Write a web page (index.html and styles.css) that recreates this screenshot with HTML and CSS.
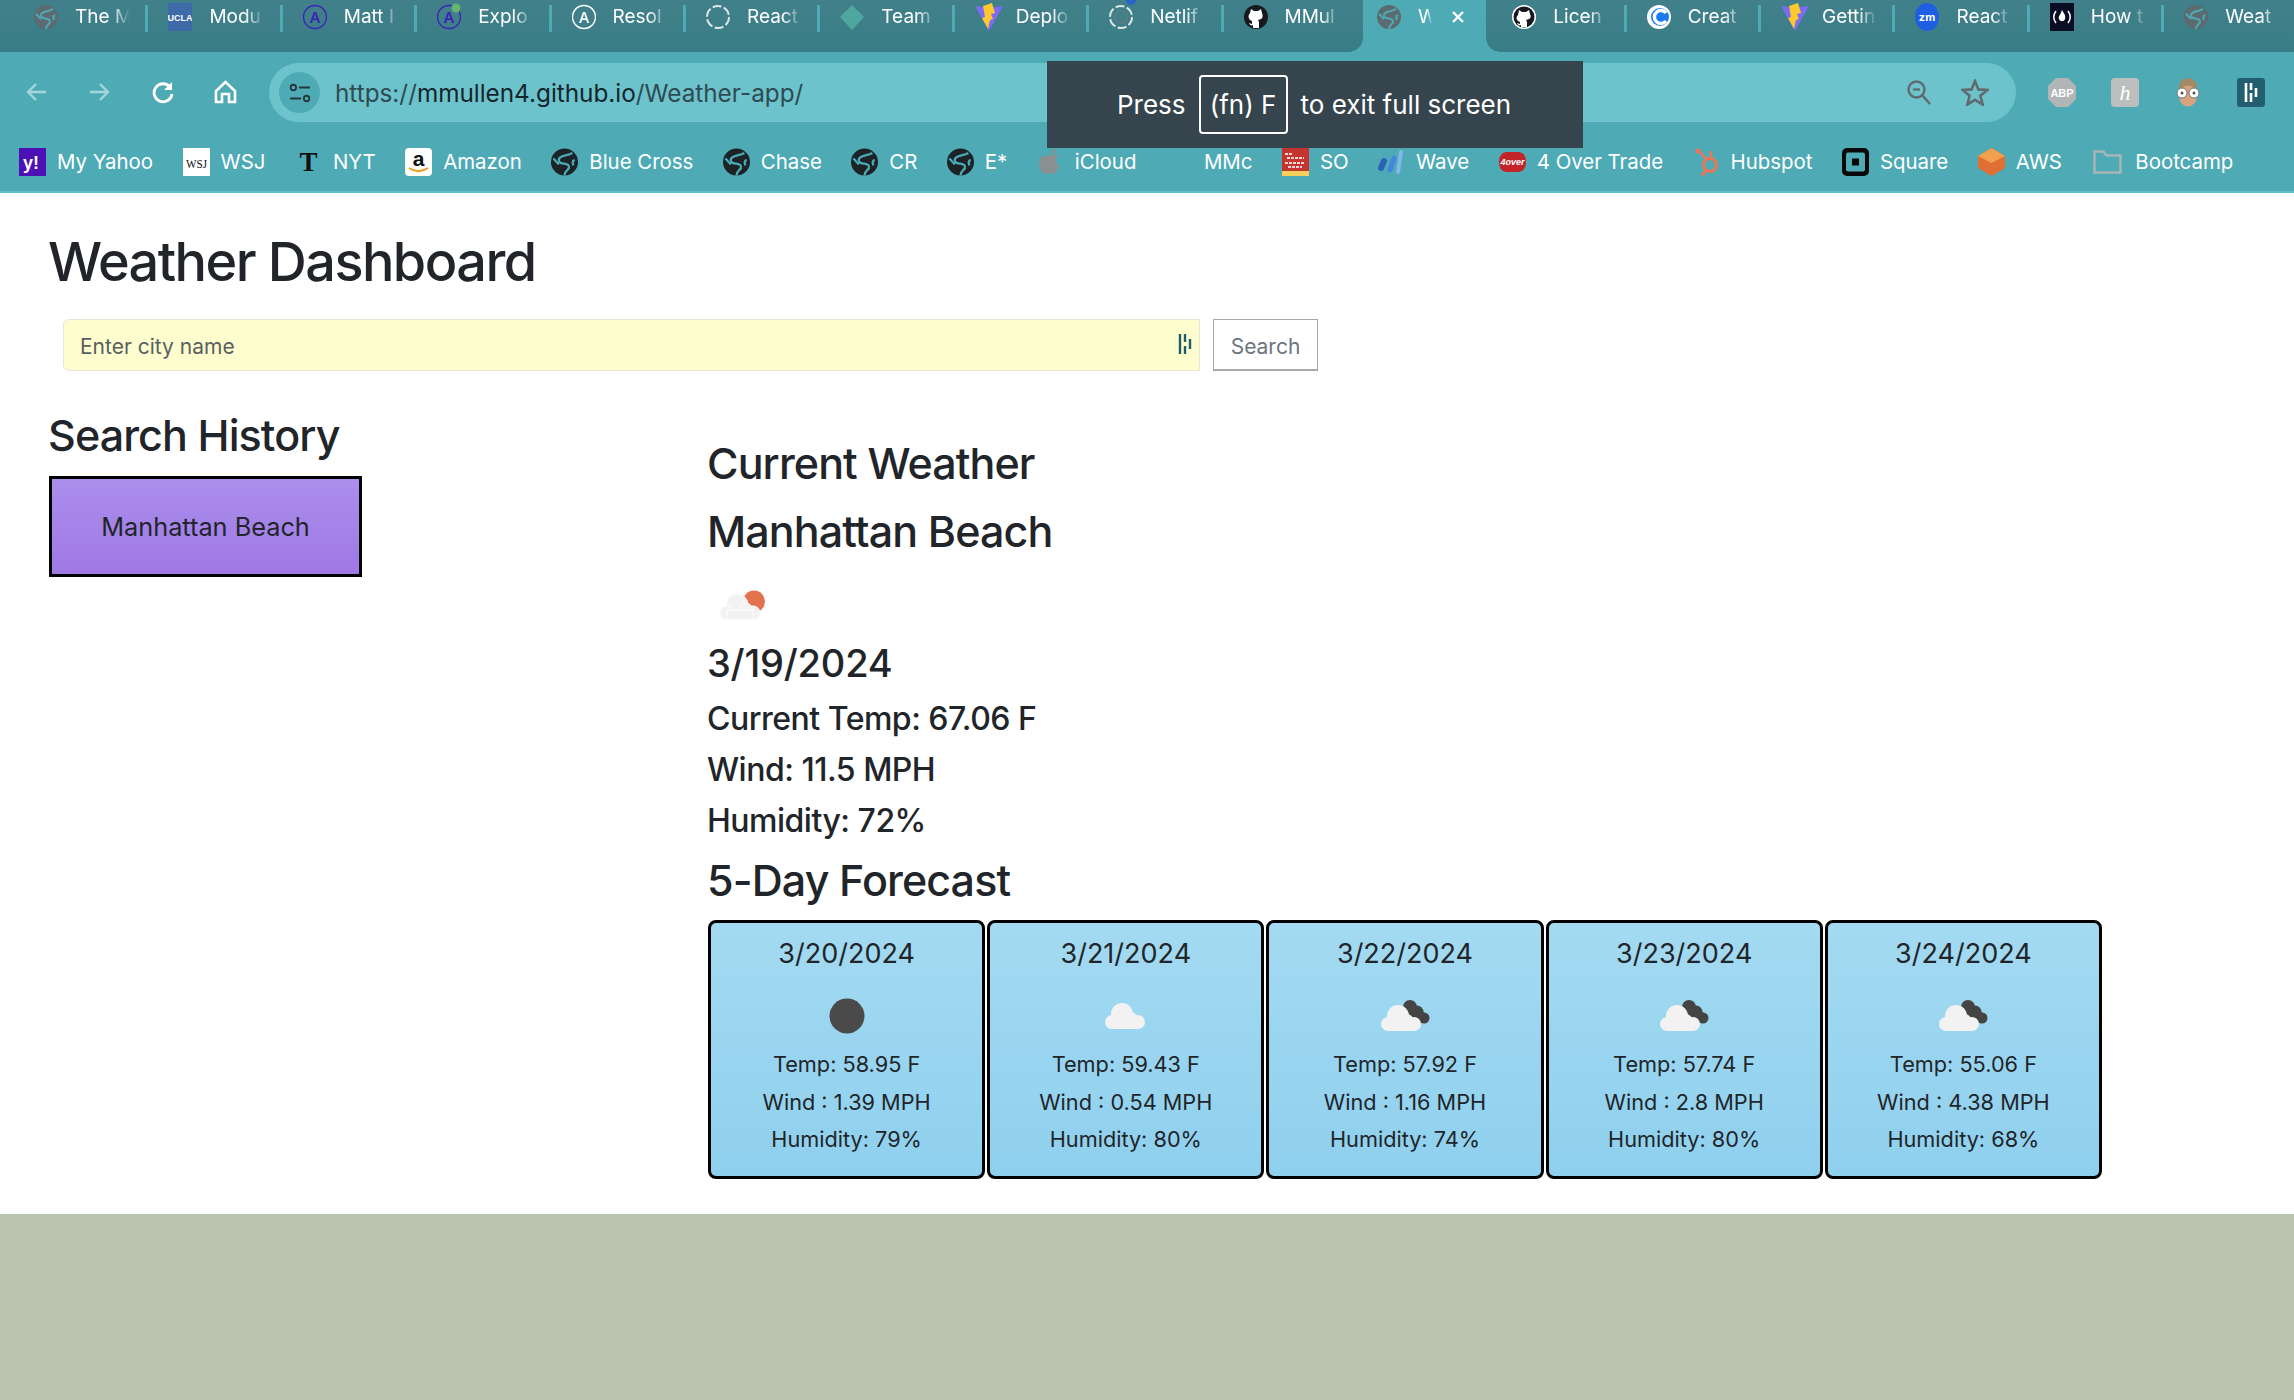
FILE: index.html
```
<!DOCTYPE html>
<html lang="en">
<head>
    <meta charset="UTF-8">
    <title>Weather Dashboard</title>
    <link rel="stylesheet" href="styles.css">
</head>
<body>
<svg class="defs" aria-hidden="true">
    <symbol id="globe" viewBox="0 0 24 24">
        <circle cx="12" cy="12" r="12" fill="currentColor"/>
        <path class="cut" d="M19 4C14 7 6 6 7 11c1 4 8 1 9 5 1 3-4 3-4 8M2 9c2 1 3 4 5 5M21 10c-2 1-2 3-1 5"/>
    </symbol>
    <symbol id="astro" viewBox="0 0 24 28">
        <circle cx="12" cy="14" r="11.500" fill="none" stroke="#3c22b8" stroke-width="1.400"/>
        <text x="12" y="19.500" text-anchor="middle" font-family="Inter, sans-serif" font-size="15" font-weight="600" fill="#3c22b8">A</text>
    </symbol>
    <symbol id="github" viewBox="0 0 24 28">
        <circle cx="12" cy="14" r="12" fill="#16191d"/>
        <path fill="#fff" d="M7 6l3 2h4l3-2 1 4c1 2 1 5-1 6l-3 1 1 2v6H9v-3c-2 1-3 0-4-2l3 1v-3l-2-1c-2-2-2-5 0-7z"/>
    </symbol>
    <symbol id="vite" viewBox="0 0 28 28">
        <path fill="#7d6cf2" d="M0 3l14 2 14-2-14 25z"/>
        <path fill="#fdc92f" d="M17 0L8 3l2 11-3 1 6 11 2-9 3-1-2-5 4-1z"/>
    </symbol>
    <symbol id="cloud" viewBox="0 0 70 70">
        <g>
            <circle cx="31" cy="33" r="11"/>
            <circle cx="21" cy="41" r="7"/>
            <circle cx="47" cy="41" r="7"/>
            <circle cx="40" cy="37" r="6"/>
            <rect x="21" y="38" width="26" height="10"/>
        </g>
    </symbol>
    <symbol id="broken" viewBox="0 0 70 70">
        <g fill="#444">
            <circle cx="40" cy="26" r="7"/>
            <circle cx="47" cy="31" r="6.500"/>
            <circle cx="54" cy="37" r="5.500"/>
            <path d="M36 20l22 14-6 8-14-8z"/>
        </g>
        <g fill="#f2f2f2">
            <circle cx="28" cy="35" r="11"/>
            <circle cx="18" cy="43" r="7"/>
            <circle cx="44" cy="43" r="7"/>
            <circle cx="37" cy="39" r="6"/>
            <rect x="18" y="40" width="26" height="10"/>
        </g>
    </symbol>
</svg>

<div class="tabstrip">
    <div class="tab"><svg class="favicon muted"><use href="#globe"/></svg><span class="tab-title">The M</span></div>
    <div class="tab">
        <svg class="favicon" viewBox="0 0 24 28"><rect width="24" height="28" fill="#3f6aa8"/><text x="12" y="18" text-anchor="middle" font-family="Liberation Sans, sans-serif" font-size="9" font-weight="700" fill="#fff">UCLA</text></svg>
        <span class="tab-title">Modu</span>
    </div>
    <div class="tab"><svg class="favicon"><use href="#astro"/></svg><span class="tab-title">Matt I</span></div>
    <div class="tab">
        <svg class="favicon" viewBox="0 0 24 28"><use href="#astro" width="24" height="28"/><circle cx="19" cy="5" r="4.500" fill="#66b56e"/></svg>
        <span class="tab-title">Explo</span>
    </div>
    <div class="tab">
        <svg class="favicon" viewBox="0 0 24 28"><circle cx="12" cy="14" r="11.500" fill="none" stroke="#fff" stroke-width="1.500"/><text x="12" y="19.500" text-anchor="middle" font-family="Inter, sans-serif" font-size="15" font-weight="500" fill="#fff">A</text></svg>
        <span class="tab-title">Resol</span>
    </div>
    <div class="tab">
        <svg class="favicon" viewBox="0 0 24 28"><circle cx="12" cy="14" r="11" fill="none" stroke="#dfe6e6" stroke-width="2" stroke-dasharray="9 2.500"/></svg>
        <span class="tab-title">React</span>
    </div>
    <div class="tab">
        <svg class="favicon" viewBox="0 0 24 28"><path fill="#4fa79f" d="M12 2l12 12-12 13L0 14z"/></svg>
        <span class="tab-title">Team</span>
    </div>
    <div class="tab"><svg class="favicon wide"><use href="#vite"/></svg><span class="tab-title">Deplo</span></div>
    <div class="tab">
        <svg class="favicon" viewBox="0 0 24 28"><circle cx="12" cy="14" r="11" fill="none" stroke="#dfe6e6" stroke-width="2" stroke-dasharray="9 2.500"/><circle cx="12" cy="14" r="6" fill="none" stroke="#5a7d84" stroke-width="2"/></svg>
        <span class="tab-title">Netlif</span>
        <span class="tab-dot"></span>
    </div>
    <div class="tab"><svg class="favicon"><use href="#github"/></svg><span class="tab-title">MMul</span></div>
    <div class="tab active">
        <svg class="favicon muted"><use href="#globe"/></svg>
        <span class="tab-title short">W</span>
        <svg class="tab-close" viewBox="0 0 14 14"><path d="M2 2l10 10M12 2L2 12" stroke="#fff" stroke-width="2.400"/></svg>
    </div>
    <div class="tab">
        <svg class="favicon" viewBox="0 0 24 28"><circle cx="12" cy="14" r="12" fill="#fff"/><circle cx="12" cy="14" r="10.500" fill="#16191d"/><path fill="#fff" d="M7 7l3 2h4l3-2 1 4c1 2 1 4-1 5l-3 1 1 2v5H9v-2c-2 1-3 0-4-2l3 1v-2l-2-1c-2-2-2-4 0-6z"/></svg>
        <span class="tab-title">Licen</span>
    </div>
    <div class="tab">
        <svg class="favicon" viewBox="0 0 24 28"><circle cx="12" cy="14" r="12" fill="#fff"/><circle cx="13" cy="14" r="9" fill="#1a7bf0"/><path d="M19 10a6.500 6.500 0 1 0 0 8" fill="none" stroke="#fff" stroke-width="3.500"/></svg>
        <span class="tab-title">Creat</span>
    </div>
    <div class="tab"><svg class="favicon wide"><use href="#vite"/></svg><span class="tab-title">Gettin</span></div>
    <div class="tab">
        <svg class="favicon" viewBox="0 0 24 28"><ellipse cx="12" cy="14" rx="12" ry="14" fill="#1d5fe0"/><text x="12" y="18" text-anchor="middle" font-family="Inter, sans-serif" font-size="11" font-weight="700" fill="#fff">zm</text></svg>
        <span class="tab-title">React</span>
    </div>
    <div class="tab">
        <svg class="favicon" viewBox="0 0 24 28"><rect width="24" height="28" fill="#0b0d24"/><path d="M6 8c-3 4-3 8 0 12M18 8c3 4 3 8 0 12" fill="none" stroke="#fff" stroke-width="1.500"/><path d="M12 7c2 4 4 5 3 9-1 3-5 3-6 0-1-3 1-3 3-9z" fill="#fff"/></svg>
        <span class="tab-title">How t</span>
    </div>
    <div class="tab last"><svg class="favicon muted"><use href="#globe"/></svg><span class="tab-title">Weat</span></div>
</div>

<div class="toolbar">
    <svg class="nav-icon" viewBox="0 0 23 24"><path d="M21 12H3M11 4l-8 8 8 8" fill="none" stroke="#a3d6db" stroke-width="2.400"/></svg>
    <svg class="nav-icon" viewBox="0 0 23 24"><path d="M2 12h18M12 4l8 8-8 8" fill="none" stroke="#a3d6db" stroke-width="2.400"/></svg>
    <svg class="nav-icon" viewBox="0 0 23 24"><path d="M19 7a9 9 0 1 0 2 7" fill="none" stroke="#fff" stroke-width="2.800"/><path d="M21 2v8h-8z" fill="#fff"/></svg>
    <svg class="nav-icon" viewBox="0 0 23 24"><path d="M11.500 2L2 11v11h6v-8h7v8h6V11z" fill="none" stroke="#fff" stroke-width="2.600"/></svg>
    <div class="omnibox">
        <span class="site-info">
            <svg viewBox="0 0 20 18" width="22" height="20"><circle cx="4" cy="4" r="2.500" fill="none" stroke="#26363c" stroke-width="1.600"/><path d="M9 4h10M1 14h10" stroke="#26363c" stroke-width="1.800"/><circle cx="16" cy="14" r="2.500" fill="none" stroke="#26363c" stroke-width="1.600"/></svg>
        </span>
        <span class="url"><span class="url-dim">https://</span>mmullen4.github.io<span class="url-dim">/Weather-app/</span></span>
        <svg class="omni-icon zoom-out" viewBox="0 0 24 25"><circle cx="9.500" cy="9.500" r="8" fill="none" stroke="#5f6b6f" stroke-width="2.400"/><path d="M15 15l8 9" stroke="#5f6b6f" stroke-width="2.600"/><path d="M6 9.500h7" stroke="#5f6b6f" stroke-width="2.200"/></svg>
        <svg class="omni-icon star" viewBox="0 0 28 27"><path d="M14 2l3.400 8.400 9 .6-7 5.800 2.300 8.800L14 20.800 6.300 25.600l2.300-8.800-7-5.800 9-.6z" fill="none" stroke="#5f6b6f" stroke-width="2.600"/></svg>
    </div>
    <div class="extensions">
        <svg class="ext" viewBox="0 0 28 29"><path d="M8 0h12l8 8v13l-8 8H8l-8-8V8z" fill="#b1b5b5"/><text x="14" y="19" text-anchor="middle" font-family="Liberation Sans, sans-serif" font-size="11" font-weight="700" fill="#fff">ABP</text></svg>
        <svg class="ext" viewBox="0 0 28 29"><rect width="28" height="29" rx="4" fill="#bdbfbf"/><text x="14" y="22" text-anchor="middle" font-family="Liberation Serif, serif" font-size="22" font-style="italic" fill="#fff">h</text></svg>
        <svg class="ext" viewBox="0 0 26 29"><circle cx="13" cy="9" r="9" fill="#a38a63"/><ellipse cx="13" cy="18" rx="9" ry="10.500" fill="#d7a27d"/><circle cx="7" cy="15" r="5" fill="#fff" stroke="#777"/><circle cx="19" cy="15" r="5" fill="#fff" stroke="#777"/><circle cx="7" cy="15" r="1.500" fill="#555"/><circle cx="19" cy="15" r="1.500" fill="#555"/></svg>
        <svg class="ext" viewBox="0 0 28 29"><rect width="28" height="29" rx="3" fill="#235e70"/><path d="M9 5v19M14 5v7M14 15v9M19 10v9" stroke="#fff" stroke-width="2.600"/></svg>
    </div>
</div>

<div class="bookmarks">
    <a class="bookmark">
        <svg class="bm-icon" viewBox="0 0 27 28"><rect width="27" height="28" fill="#4c10b5"/><text x="12" y="21" text-anchor="middle" font-family="Liberation Sans, sans-serif" font-size="18" font-weight="700" fill="#fff">y!</text></svg>My Yahoo
    </a>
    <a class="bookmark">
        <svg class="bm-icon" viewBox="0 0 27 28"><rect width="27" height="28" fill="#fff"/><text x="13.500" y="20" text-anchor="middle" font-family="Liberation Serif, serif" font-size="13" textLength="21" lengthAdjust="spacingAndGlyphs" fill="#111">WSJ</text></svg>WSJ
    </a>
    <a class="bookmark">
        <svg class="bm-icon" viewBox="0 0 27 28"><text x="13.500" y="23" text-anchor="middle" font-family="Liberation Serif, serif" font-size="27" font-weight="700" fill="#111">T</text></svg>NYT
    </a>
    <a class="bookmark">
        <svg class="bm-icon" viewBox="0 0 27 28"><rect width="27" height="28" rx="4" fill="#fff"/><text x="13.500" y="18" text-anchor="middle" font-family="Liberation Sans, sans-serif" font-size="21" font-weight="700" fill="#111">a</text><path d="M4 20c6 4 13 4 19 0" fill="none" stroke="#f29a1f" stroke-width="2"/></svg>Amazon
    </a>
    <a class="bookmark"><svg class="bm-icon dark"><use href="#globe"/></svg>Blue Cross</a>
    <a class="bookmark"><svg class="bm-icon dark"><use href="#globe"/></svg>Chase</a>
    <a class="bookmark"><svg class="bm-icon dark"><use href="#globe"/></svg>CR</a>
    <a class="bookmark"><svg class="bm-icon dark"><use href="#globe"/></svg>E*</a>
    <a class="bookmark">
        <svg class="bm-icon" viewBox="0 0 27 28"><path fill="#8a8f90" d="M14 7c2-1 4-1 7 1-3 2-3 8 1 10-1 4-4 8-6 8-2 0-2-1-4-1s-3 1-4 1c-3 0-6-7-6-11 0-6 5-9 9-7zM14 6c0-3 2-5 5-6 0 3-2 6-5 6z"/></svg>iCloud
    </a>
    <a class="bookmark"><span class="bm-icon blank"></span>MMc</a>
    <a class="bookmark">
        <svg class="bm-icon" viewBox="0 0 27 28"><rect width="27" height="28" fill="#c5342f"/><rect y="23" width="27" height="5" fill="#f6cf5c"/><path d="M3 6h8M5 10h17M3 15h20M6 19h14" stroke="#f1d6d0" stroke-width="2" stroke-dasharray="3 1"/></svg>SO
    </a>
    <a class="bookmark">
        <svg class="bm-icon" viewBox="0 0 27 28"><path d="M3 20l3-7" stroke="#2b62b8" stroke-width="6" stroke-linecap="round"/><path d="M12 22l4-12" stroke="#3f86dc" stroke-width="5" stroke-linecap="round"/><path d="M20 24l3-20" stroke="#80b6ee" stroke-width="4" stroke-linecap="round"/></svg>Wave
    </a>
    <a class="bookmark">
        <svg class="bm-icon" viewBox="0 0 27 28"><path d="M8 4h11c5 0 8 4 8 10s-3 10-8 10H8c-5 0-8-4-8-10S3 4 8 4z" fill="#c3242a"/><text x="13.500" y="17" text-anchor="middle" font-family="Liberation Sans, sans-serif" font-size="9" font-style="italic" font-weight="700" fill="#fff">4over</text></svg>4 Over Trade
    </a>
    <a class="bookmark">
        <svg class="bm-icon" viewBox="0 0 27 28"><circle cx="17" cy="17" r="6.500" fill="none" stroke="#e8775a" stroke-width="3"/><path d="M6 3l8 9M18 9V3M11 25l3-4" stroke="#e8775a" stroke-width="2.500"/><circle cx="5" cy="3" r="2.500" fill="#e8775a"/><circle cx="10" cy="26" r="2" fill="#e8775a"/></svg>Hubspot
    </a>
    <a class="bookmark">
        <svg class="bm-icon" viewBox="0 0 27 28"><rect width="27" height="28" rx="5" fill="#080808"/><rect x="4" y="4.500" width="19" height="19" rx="2" fill="#4eaab5"/><rect x="10" y="10.500" width="7" height="7" fill="#080808"/></svg>Square
    </a>
    <a class="bookmark">
        <svg class="bm-icon" viewBox="0 0 27 28"><path d="M13.500 0L27 8v12l-13.500 8L0 20V8z" fill="#e06f33"/><path d="M13.500 0L27 8l-13.500 7L0 8z" fill="#f0a04f"/></svg>AWS
    </a>
    <a class="bookmark">
        <svg class="bm-icon folder" viewBox="0 0 29 24"><path d="M1.500 1.500h9l3 4h14v17h-26z" fill="none" stroke="#a9b6b7" stroke-width="2.400"/></svg>Bootcamp
    </a>
</div>

<!-- fullscreen notice, lies over the toolbar -->
<div class="fs-toast">
    <span>Press</span>
    <span class="fs-key">(fn) F</span>
    <span>to exit full screen</span>
</div>

<main class="page">
    <h1 class="title">Weather Dashboard</h1>
    <form class="search-form">
        <div class="search-input">
            <span>Enter city name</span>
            <svg viewBox="0 0 14 20" width="14" height="20"><path d="M2 0v20M7 0v8M7 12v8M12 5v10" stroke="#1d5c70" stroke-width="2.400"/></svg>
        </div>
        <button class="search-btn" type="button">Search</button>
    </form>

    <div class="columns">
        <aside class="history">
            <h2 class="heading">Search History</h2>
            <button class="history-btn" type="button">Manhattan Beach</button>
        </aside>

        <section class="current">
            <h2 class="heading">Current Weather</h2>
            <h2 class="heading city">Manhattan Beach</h2>
            <svg class="current-icon" viewBox="0 0 70 70">
                <circle cx="46" cy="31.500" r="11" fill="#e1734f"/>
                <use href="#cloud" x="-2" y="2" width="70" height="70" fill="#f2f2f2" stroke="#fff" stroke-width="1"/>
            </svg>
            <h3 class="date">3/19/2024</h3>
            <p class="stat">Current Temp: 67.06 F</p>
            <p class="stat">Wind: 11.5 MPH</p>
            <p class="stat">Humidity: 72%</p>
            <h2 class="heading forecast-title">5-Day Forecast</h2>
            <div class="forecast">
                <div class="card">
                    <div class="card-date">3/20/2024</div>
                    <svg class="card-icon" viewBox="0 0 70 70"><circle cx="35" cy="35" r="17.500" fill="#4a4a4a"/></svg>
                    <p>Temp: 58.95 F</p><p>Wind : 1.39 MPH</p><p>Humidity: 79%</p>
                </div>
                <div class="card">
                    <div class="card-date">3/21/2024</div>
                    <svg class="card-icon" viewBox="0 0 70 70"><use href="#cloud" width="70" height="70" fill="#f2f2f2"/></svg>
                    <p>Temp: 59.43 F</p><p>Wind : 0.54 MPH</p><p>Humidity: 80%</p>
                </div>
                <div class="card">
                    <div class="card-date">3/22/2024</div>
                    <svg class="card-icon" viewBox="0 0 70 70"><use href="#broken" width="70" height="70"/></svg>
                    <p>Temp: 57.92 F</p><p>Wind : 1.16 MPH</p><p>Humidity: 74%</p>
                </div>
                <div class="card">
                    <div class="card-date">3/23/2024</div>
                    <svg class="card-icon" viewBox="0 0 70 70"><use href="#broken" width="70" height="70"/></svg>
                    <p>Temp: 57.74 F</p><p>Wind : 2.8 MPH</p><p>Humidity: 80%</p>
                </div>
                <div class="card">
                    <div class="card-date">3/24/2024</div>
                    <svg class="card-icon" viewBox="0 0 70 70"><use href="#broken" width="70" height="70"/></svg>
                    <p>Temp: 55.06 F</p><p>Wind : 4.38 MPH</p><p>Humidity: 68%</p>
                </div>
            </div>
        </section>
    </div>
</main>
</body>
</html>
```

FILE: styles.css
```
* {
    margin: 0;
    padding: 0;
    box-sizing: border-box;
}

html,
body {
    height: 1400px;
    overflow: hidden;
}

body {
    background-color: #b9c5ae;
    font-family: Inter, "Noto Sans", sans-serif;
    color: #212529;
    position: relative;
}

.defs {
    display: none;
}

/* tabs */
.tabstrip {
    height: 52px;
    padding-left: 14px;
    display: flex;
    background: linear-gradient(#41808a, #397e86);
}

.tab {
    flex: 0 0 134.4px;
    height: 52px;
    padding: 3px 0 0 20px;
    display: flex;
    align-items: flex-start;
    gap: 17px;
    position: relative;
}

.tab::after {
    content: "";
    width: 3px;
    height: 27px;
    background-color: #4eaab5;
    position: absolute;
    right: 0;
    top: 5px;
}

.tab.active::after,
.tab.last::after,
.tab:has(+ .active)::after {
    display: none;
}

.tab.active {
    background: #4eaab5;
    margin: 0 6px 0 5px;
    flex-basis: 123.4px;
    padding-left: 14px;
}

/* the rounded foot of the active tab */
.tab.active::before {
    content: "";
    position: absolute;
    left: -14px;
    right: -14px;
    bottom: 0;
    height: 14px;
    background:
        radial-gradient(circle at 0 0, #397e86 13.500px, #4eaab5 14px) left / 14px 14px no-repeat,
        radial-gradient(circle at 100% 0, #397e86 13.500px, #4eaab5 14px) right / 14px 14px no-repeat;
}

.favicon {
    width: 24px;
    height: 28px;
    flex: none;
}

.favicon.wide {
    width: 28px;
    margin-right: -4px;
}

.favicon.muted {
    color: #5c6b70;
}

.cut {
    fill: none;
    stroke: #4eaab5;
    stroke-width: 2;
}

.tab .cut {
    stroke: #3f8a93;
}

.tab-title {
    width: 60px;
    overflow: hidden;
    white-space: nowrap;
    font-size: 19px;
    line-height: 28px;
    color: #fff;
    -webkit-mask-image: linear-gradient(90deg, #000 60%, transparent 92%);
    mask-image: linear-gradient(90deg, #000 60%, transparent 92%);
}

.tab-title.short {
    width: 20px;
    margin-right: -4px;
    -webkit-mask-image: linear-gradient(90deg, #000 45%, transparent 70%);
    mask-image: linear-gradient(90deg, #000 45%, transparent 70%);
}

.tab-close {
    width: 14px;
    height: 14px;
    flex: none;
    margin-top: 7px;
}

.tab-dot {
    width: 10px;
    height: 5px;
    background-color: #2f62c8;
    border-radius: 0 0 6px 6px;
    position: absolute;
    left: 37px;
    top: 0;
}

/* toolbar */
.toolbar {
    height: 80px;
    padding: 11px 0 10px 25px;
    display: flex;
    align-items: center;
    gap: 40px;
    background-color: #4eaab5;
}

.nav-icon {
    width: 23px;
    height: 24px;
    flex: none;
    margin-top: -2px;
}

.omnibox {
    flex: 0 0 1747px;
    height: 59px;
    margin-left: -8px;
    padding: 0 27px 0 10px;
    display: flex;
    align-items: center;
    background-color: #6dc3cb;
    border-radius: 30px;
}

.site-info {
    width: 41px;
    height: 41px;
    display: flex;
    align-items: center;
    justify-content: center;
    background-color: #4eaab5;
    border-radius: 50%;
}

.url {
    margin-left: 15px;
    font-size: 24.300px;
    color: #14252b;
    white-space: nowrap;
}

.url-dim {
    color: #2f4a52;
}

.omni-icon {
    flex: none;
}

.zoom-out {
    width: 24px;
    height: 25px;
    margin-left: auto;
}

.star {
    width: 28px;
    height: 27px;
    margin-left: 30px;
}

.extensions {
    margin-left: -8px;
    display: flex;
    align-items: center;
    gap: 35px;
}

.ext {
    width: 28px;
    height: 29px;
}

/* bookmarks */
.bookmarks {
    height: 61px;
    padding-left: 19px;
    display: flex;
    align-items: center;
    gap: 29.500px;
    background-color: #4eaab5;
    border-bottom: 2px solid #5ec0c8;
}

.bookmark {
    display: flex;
    align-items: center;
    gap: 11px;
    font-size: 20.400px;
    color: #fff;
    white-space: nowrap;
}

.bm-icon {
    width: 27px;
    height: 28px;
    flex: none;
}

.bm-icon.dark {
    color: #1c2327;
}

.bm-icon.folder {
    width: 29px;
    height: 24px;
    margin: 0 2px;
}

/* toast over the toolbar */
.fs-toast {
    width: 536px;
    height: 87px;
    padding-left: 70px;
    display: flex;
    align-items: center;
    gap: 13px;
    font-size: 26px;
    color: #fff;
    background-color: #36454d;
    position: absolute;
    left: 1047px;
    top: 61px;
}

.fs-key {
    width: 89px;
    height: 59px;
    display: flex;
    align-items: center;
    justify-content: center;
    border: 2px solid #fff;
    border-radius: 4px;
}

/* page */
.page {
    height: 1021px;
    padding: 35px 0 0 49px;
    background-color: #fff;
}

.title {
    margin-left: -1px;
    font-size: 54px;
    font-weight: 500;
    line-height: 67px;
    letter-spacing: -1.550px;
}

.search-form {
    margin: 24px 0 0 14px;
    display: flex;
    gap: 13px;
}

.search-input {
    width: 1137px;
    height: 52px;
    padding: 2px 4px 0 16px;
    display: flex;
    align-items: center;
    justify-content: space-between;
    font-size: 21px;
    color: #5a5f63;
    background-color: #fefdcd;
    border: 1px solid #e6e6d8;
    border-radius: 6px 0 0 6px;
}

.search-input svg {
    margin: -5px 3px 0 0;
}

.search-btn {
    width: 105px;
    height: 52px;
    padding-top: 3px;
    font: 21px Inter, sans-serif;
    color: #6c757d;
    background-color: #fff;
    border: 2px solid #a5a9ac;
    border-width: 1px 1px 2px;
}

.columns {
    margin-top: 37px;
    display: flex;
}

.history {
    flex: 0 0 659px;
}

.heading {
    font-size: 43px;
    font-weight: 500;
    line-height: 54px;
    letter-spacing: -0.900px;
}

.history .heading {
    margin-left: -1px;
}

.history-btn {
    width: 313px;
    height: 101px;
    margin-top: 14px;
    font: 25.300px Inter, sans-serif;
    color: #212529;
    background: linear-gradient(#ab8eec, #9f78e4);
    border: 3px solid #000;
}

.current {
    margin-left: -1px;
    padding-top: 28px;
}

.city {
    margin-top: 14px;
}

.current-icon {
    width: 70px;
    height: 70px;
    margin: 12px 0 0 1px;
    display: block;
}

.date {
    font-size: 38px;
    font-weight: 500;
    line-height: 47px;
    letter-spacing: -0.200px;
}

.stat {
    margin-top: 12px;
    font-size: 32px;
    font-weight: 500;
    line-height: 40px;
    letter-spacing: -0.500px;
}

.stat + .stat {
    margin-top: 11px;
}

.forecast-title {
    margin-top: 12px;
}

.forecast {
    margin: 13px 0 0 1px;
    width: 1394px;
    display: grid;
    grid-template-columns: repeat(5, 1fr);
    gap: 2px;
}

.card {
    height: 259px;
    padding-top: 14px;
    text-align: center;
    background: linear-gradient(#a3daf1, #8fd0ee);
    border: 3px solid #000;
    border-radius: 8px;
}

.card-date {
    font-size: 27px;
    line-height: 34px;
}

.card-icon {
    width: 70px;
    height: 70px;
    margin: 10px auto 0;
    display: block;
}

.card p {
    font-size: 21.700px;
    line-height: 27px;
    margin-bottom: 10.600px;
}
```
